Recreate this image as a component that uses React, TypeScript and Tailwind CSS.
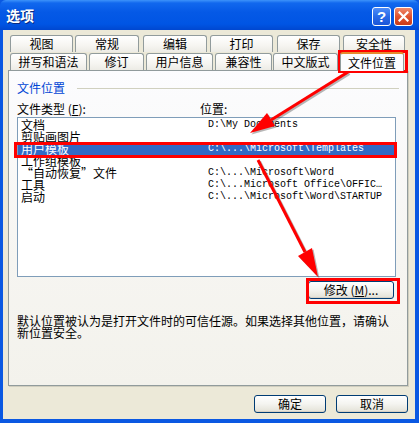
import React from "react";

const cjk = { fontFamily: '"Noto Sans CJK SC", "Noto Sans", sans-serif' };
const mono = { fontFamily: '"Liberation Mono", "DejaVu Sans Mono", monospace' };

const row1 = [
  { t: "视图", c: "ml-[2px] w-[63px]" },
  { t: "常规", c: "ml-[2px] w-[64px]" },
  { t: "编辑", c: "ml-[4px] w-[64px]" },
  { t: "打印", c: "ml-[3px] w-[63px]" },
  { t: "保存", c: "ml-[4px] w-[63px]" },
  { t: "安全性", c: "ml-[3px] w-[62px]" },
];
const row2 = [
  { t: "拼写和语法", c: "ml-[2px] w-[77px]" },
  { t: "修订", c: "ml-[2px] w-[55px]" },
  { t: "用户信息", c: "ml-[2px] w-[67px]" },
  { t: "兼容性", c: "ml-[2px] w-[57px]" },
  { t: "中文版式", c: "ml-[1px] w-[65px]" },
];

const items: { name: string; path: string }[] = [
  { name: "文档", path: "D:\\My Documents" },
  { name: "剪贴画图片", path: "" },
  { name: "用户模板", path: "C:\\...\\Microsoft\\Templates" },
  { name: "工作组模板", path: "" },
  { name: "“自动恢复”文件", path: "C:\\...\\Microsoft\\Word" },
  { name: "工具", path: "C:\\...Microsoft Office\\OFFIC…" },
  { name: "启动", path: "C:\\...\\Microsoft\\Word\\STARTUP" },
];

function Tab({ t, c }: { t: string; c: string }) {
  return (
    <div
      className={`${c} h-[17px] border border-b-0 border-[#919B9C] rounded-t-[3px] bg-[linear-gradient(180deg,#FFFFFF_0%,#F6F5F1_60%,#ECEBE5_100%)] flex items-center justify-center text-[12px] leading-[12px] text-black`}
    >
      {t}
    </div>
  );
}

function XPButton({ children, className }: { children: React.ReactNode; className: string }) {
  return (
    <div
      className={`${className} h-[18px] border border-[#003C74] rounded-[3px] bg-[linear-gradient(180deg,#FFFFFF_0%,#F4F4F0_50%,#E3E1D6_100%)] flex items-center justify-center text-[12px] leading-[12px] text-black shadow-[inset_0_-1px_0_#D6D0C5]`}
    >
      {children}
    </div>
  );
}

export default function App() {
  return (
    <div className="relative w-[419px] h-[423px] overflow-hidden bg-[#0A58E2] flex flex-col" style={cjk}>
      {/* Title bar */}
      <div className="h-[30px] shrink-0 rounded-t-[6px] bg-[linear-gradient(180deg,#3D93FA_0%,#1168EE_10%,#0559E6_40%,#0055E4_80%,#0047D0_100%)] flex items-center pl-[6px] pr-[6px]">
        <div className="text-white font-bold text-[14px] leading-[14px] [text-shadow:1px_1px_0_#0A2A80]">选项</div>
        <div className="ml-auto flex items-center gap-[3px] mt-[2px]">
          <div className="w-[19px] h-[19px] rounded-[3px] border border-white bg-[linear-gradient(180deg,#4F8DF8_0%,#2A6BE8_50%,#1B55D8_100%)] flex items-center justify-center text-white font-bold text-[15px] leading-[15px]" style={{ fontFamily: '"Liberation Sans", sans-serif' }}>
            ?
          </div>
          <div className="w-[19px] h-[19px] rounded-[3px] border border-white bg-[linear-gradient(180deg,#EE8A6E_0%,#E0532F_50%,#C83A18_100%)] flex items-center justify-center">
            <svg width="11" height="11" viewBox="0 0 11 11">
              <path d="M1.5 1.5 L9.5 9.5 M9.5 1.5 L1.5 9.5" stroke="white" strokeWidth="2.2" strokeLinecap="square" />
            </svg>
          </div>
        </div>
      </div>

      {/* Body */}
      <div className="ml-[3px] mr-[4px] mb-[4px] flex-1 bg-[#ECE9D8] pl-[5px] pt-[5px] flex flex-col">
        {/* Tabs */}
        <div className="flex">
          {row1.map((r) => (
            <Tab key={r.t} t={r.t} c={r.c} />
          ))}
        </div>
        <div className="flex mt-[1px] relative z-10">
          {row2.map((r) => (
            <Tab key={r.t} t={r.t} c={r.c} />
          ))}
          <div className="ml-[2px] w-[64px] h-[19px] -mt-[1px] border border-b-0 border-[#919B9C] border-t-[#E68B2C] border-t-2 rounded-t-[3px] bg-[#FCFCFE] flex items-center justify-center text-[12px] leading-[12px] text-black">
            文件位置
          </div>
        </div>

        {/* Panel */}
        <div className="-mt-[1px] w-[400px] h-[316px] border border-[#919B9C] bg-[linear-gradient(180deg,#FCFCFE_0%,#F6F5F1_60%,#F3F2EC_100%)] shadow-[1px_1px_0_#D0CEBF] flex flex-col pl-[8px] pt-[11px]">
          <div className="flex items-center">
            <div className="text-[12px] leading-[12px] text-[#0046D5]">文件位置</div>
            <div className="ml-[12px] mr-[8px] flex-1 h-px bg-[#D0D0BF]" />
          </div>
          <div className="mt-[9px] flex text-[12px] leading-[12px] text-black">
            <div className="w-[183px]">
              文件类型 (<span className="underline">F</span>):
            </div>
            <div>位置:</div>
          </div>
          <div className="mt-[2px] w-[379px] h-[160px] border border-[#7F9DB9] bg-white pt-[1px]">
            {items.map((it, i) => (
              <div
                key={i}
                className={`h-[12px] flex items-center text-[12px] leading-[12px] ${i === 2 ? "bg-[#316AC5] text-white" : "text-black"}`}
              >
                <div className="w-[190px] pl-[3px] whitespace-nowrap">{it.name}</div>
                <div className="text-[10px] leading-[12px] whitespace-pre" style={mono}>
                  {it.path}
                </div>
              </div>
            ))}
          </div>
          <div className="mt-[4px] flex pr-[13px] justify-end">
            <XPButton className="w-[86px]">
              修改 (<span className="underline">M</span>)...
            </XPButton>
          </div>
          <div className="mt-[16px] text-[12px] leading-[12px] text-black">
            默认位置被认为是打开文件时的可信任源。如果选择其他位置，请确认
            <br />
            新位置安全。
          </div>
        </div>

        {/* Bottom buttons */}
        <div className="mt-[9px] flex justify-end w-[400px] gap-[10px]">
          <XPButton className="w-[72px]">确定</XPButton>
          <XPButton className="w-[72px]">取消</XPButton>
        </div>
      </div>

      {/* Annotations */}
      <svg className="absolute left-0 top-0 pointer-events-none" width="419" height="423" viewBox="0 0 419 423">
        <g opacity="0.35" transform="translate(1.5,1.5)">
          <line x1="348" y1="72" x2="271" y2="120" stroke="#333" strokeWidth="3" />
          <polygon points="250,133 275,126 267,113" fill="#333" />
          <line x1="258" y1="160" x2="305" y2="252" stroke="#333" strokeWidth="3" />
          <polygon points="318,277 312,248 298,256" fill="#333" />
        </g>
        <rect x="339.5" y="51.5" width="67" height="20" fill="none" stroke="#FF0000" strokeWidth="3" />
        <rect x="15.5" y="143.5" width="380" height="13" fill="none" stroke="#FF0000" strokeWidth="3" />
        <rect x="307.5" y="279.5" width="91" height="23" fill="none" stroke="#FF0000" strokeWidth="3" />
        <line x1="348" y1="72" x2="271" y2="120" stroke="#FF0000" strokeWidth="3" />
        <polygon points="250,133 275,126 267,113" fill="#FF0000" />
        <line x1="258" y1="160" x2="305" y2="252" stroke="#FF0000" strokeWidth="3" />
        <polygon points="318,277 312,248 298,256" fill="#FF0000" />
      </svg>
    </div>
  );
}
